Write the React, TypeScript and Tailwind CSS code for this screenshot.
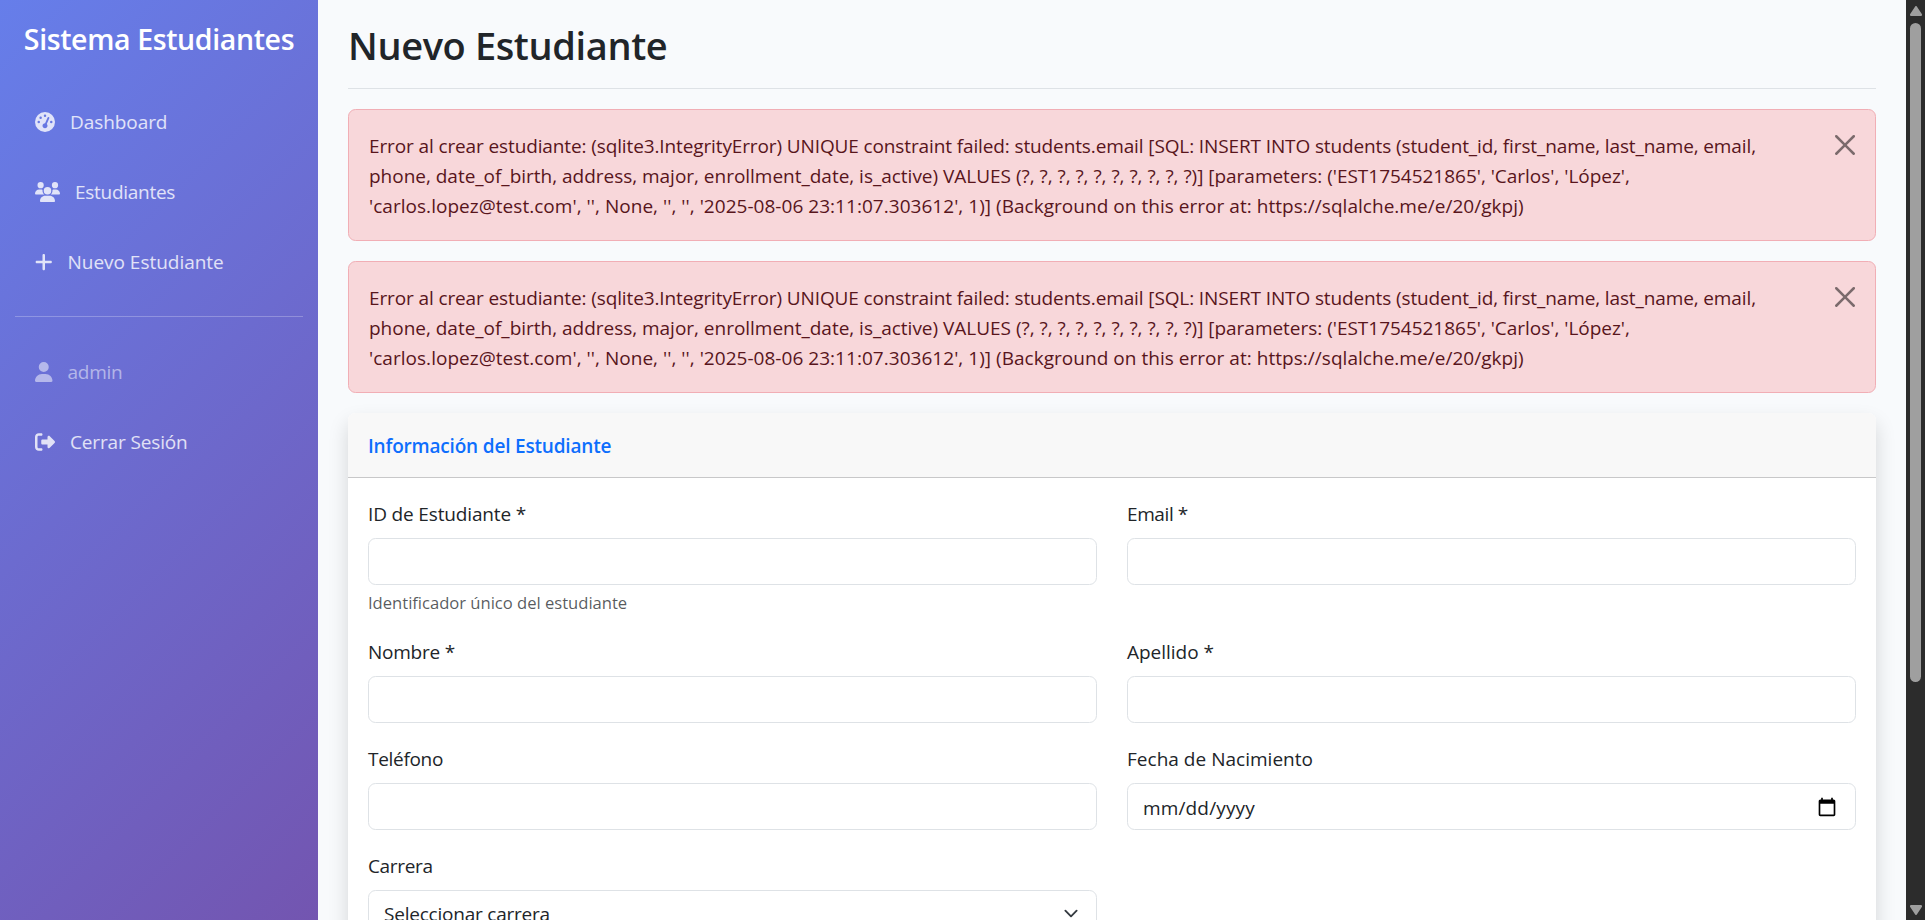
import React from "react";
import type { ReactNode } from "react";
import { FaGaugeHigh, FaPlus, FaRightFromBracket, FaUser, FaUsers } from "react-icons/fa6";

function NavItem({ icon, children, muted = false }: { icon: ReactNode; children: ReactNode; muted?: boolean }) {
  return (
    <li className="py-[5px]">
      <a
        className={
          muted
            ? "flex h-[60px] items-center gap-[15px] px-5 text-white/50"
            : "flex h-[60px] items-center gap-[15px] px-5 text-white/80"
        }
      >
        {icon}
        {children}
      </a>
    </li>
  );
}

function Sidebar() {
  return (
    <aside className="h-[1220px] w-[318px] shrink-0 bg-[linear-gradient(135deg,#667eea_0%,#764ba2_100%)] px-[15px] pt-[20px]">
      <h4 className="h-[36px] text-center text-[28.5px] leading-[38px] font-semibold tracking-[-0.37px] whitespace-nowrap text-white">
        Sistema Estudiantes
      </h4>
      <ul className="mt-[31px]">
        <NavItem icon={<FaGaugeHigh className="h-5 w-5" />}>
          <span className="tracking-[-0.07px]">Dashboard</span>
        </NavItem>
        <NavItem icon={<FaUsers className="h-5 w-[25px]" />}>
          <span className="tracking-[-0.28px]">Estudiantes</span>
        </NavItem>
        <NavItem icon={<FaPlus className="h-5 w-[17.5px]" />}>
          <span className="tracking-[-0.02px]">Nuevo Estudiante</span>
        </NavItem>
      </ul>
      <hr className="mt-[19px] mb-5 border-t border-white/25" />
      <ul>
        <NavItem muted icon={<FaUser className="h-5 w-[17.5px]" />}>
          <span className="tracking-[-0.25px]">admin</span>
        </NavItem>
        <NavItem icon={<FaRightFromBracket className="h-5 w-5" />}>
          <span className="tracking-[-0.14px]">Cerrar Sesión</span>
        </NavItem>
      </ul>
    </aside>
  );
}

function ErrorAlert() {
  return (
    <div className="mb-5 flex h-[132px] items-start justify-between rounded-[7.5px] border border-[#f1aeb5] bg-[#f8d7da] pt-5 pr-5 pl-5 text-[#58151c]">
      <p className="pt-px leading-[30px] whitespace-nowrap">
        <span className="block tracking-[-0.12px]">
          Error al crear estudiante: (sqlite3.IntegrityError) UNIQUE constraint failed: students.email [SQL: INSERT INTO
          students (student_id, first_name, last_name, email,
        </span>
        <span className="block tracking-[-0.02px]">
          phone, date_of_birth, address, major, enrollment_date, is_active) VALUES (?, ?, ?, ?, ?, ?, ?, ?, ?, ?)]
          [parameters: ('EST1754521865', 'Carlos', 'López',
        </span>
        <span className="block tracking-[0.034px]">
          'carlos.lopez@test.com', '', None, '', '', '2025-08-06 23:11:07.303612', 1)] (Background on this error at:
          https://sqlalche.me/e/20/gkpj)
        </span>
      </p>
      <button aria-label="Close" className="mt-[5px] opacity-50">
        <svg viewBox="0 0 16 16" className="h-5 w-5" fill="#000">
          <path d="M.293.293a1 1 0 0 1 1.414 0L8 6.586 14.293.293a1 1 0 1 1 1.414 1.414L9.414 8l6.293 6.293a1 1 0 0 1-1.414 1.414L8 9.414l-6.293 6.293a1 1 0 0 1-1.414-1.414L6.586 8 .293 1.707a1 1 0 0 1 0-1.414z" />
        </svg>
      </button>
    </div>
  );
}

function Field({ label, children }: { label: ReactNode; children: ReactNode }) {
  return (
    <div className="mb-5">
      <label className="mb-[9px] block pt-px leading-[30px]">{label}</label>
      {children}
    </div>
  );
}

function Box({ children }: { children?: ReactNode }) {
  return (
    <div className="flex h-[47px] items-center justify-between rounded-[7.5px] border border-[#dee2e6] bg-white px-[15px]">
      {children}
    </div>
  );
}

function StudentForm() {
  return (
    <section className="rounded-[7.5px] bg-white shadow-[0_10px_20px_rgba(0,0,0,0.15)]">
      <header className="h-[65px] rounded-t-[7.5px] border-b border-[#c8c8c9] bg-[#f8f8f8] px-5 pt-[18px]">
        <h6 className="leading-[30px] font-semibold tracking-[-0.19px] text-[#0d6efd]">Información del Estudiante</h6>
      </header>
      <form className="grid grid-cols-2 gap-x-[30px] px-5 pt-5 pb-5">
        <Field label={<span className="tracking-[-0.15px]">ID de Estudiante *</span>}>
          <Box />
          <div className="mt-[5px] h-[26px] text-[16.625px] leading-[26px] tracking-[-0.02px] text-[#212529]/75">
            Identificador único del estudiante
          </div>
        </Field>
        <Field label={<span className="tracking-[-0.4px]">Email *</span>}>
          <Box />
        </Field>
        <Field label={<span className="tracking-[-0.24px]">Nombre *</span>}>
          <Box />
        </Field>
        <Field label={<span className="tracking-[-0.02px]">Apellido *</span>}>
          <Box />
        </Field>
        <Field label={<span className="tracking-[-0.3px]">Teléfono</span>}>
          <Box />
        </Field>
        <Field label={<span className="tracking-[0.02px]">Fecha de Nacimiento</span>}>
          <Box>
            <span className="pt-[3px] tracking-[0.15px]">mm/dd/yyyy</span>
            <svg viewBox="0 0 24 24" className="mr-[3px] h-5 w-5" fill="#000">
              <path d="M20 3h-1V1h-2v2H7V1H5v2H4c-1.1 0-2 .9-2 2v16c0 1.1.9 2 2 2h16c1.1 0 2-.9 2-2V5c0-1.1-.9-2-2-2zm0 18H4V8h16v13z" />
            </svg>
          </Box>
        </Field>
        <Field label={<span className="tracking-[-0.35px]">Carrera</span>}>
          <Box>
            <span className="pt-[2px] tracking-[-0.22px]">Seleccionar carrera</span>
            <svg viewBox="0 0 16 16" className="h-[15px] w-5" fill="none" stroke="#343a40" strokeWidth="2" strokeLinecap="round" strokeLinejoin="round">
              <path d="m2 5 6 6 6-6" />
            </svg>
          </Box>
        </Field>
      </form>
    </section>
  );
}

function Scrollbar() {
  return (
    <div className="flex h-[920px] w-[19px] shrink-0 flex-col items-center bg-[#2c2c2c] pt-[6px] pb-[5px]">
      <svg viewBox="0 0 12 10" className="h-[10px] w-3 shrink-0" fill="#9f9f9f">
        <path d="M5 .7a1.2 1.2 0 0 1 2 0L11.8 8a1.2 1.2 0 0 1-1 2H1.200a1.200 1.200 0 0 1-1-2z" />
      </svg>
      <div className="mt-[7px] h-[659px] w-[11px] rounded-full bg-[#9f9f9f]" />
      <svg viewBox="0 0 12 10" className="mt-auto h-[10px] w-3 shrink-0 rotate-180" fill="#9f9f9f">
        <path d="M5 .7a1.2 1.2 0 0 1 2 0L11.8 8a1.2 1.2 0 0 1-1 2H1.200a1.200 1.200 0 0 1-1-2z" />
      </svg>
    </div>
  );
}

export default function App() {
  return (
    <div className="flex h-[920px] w-[1925px] items-start overflow-hidden bg-[#f8fafc] font-['Open_Sans','Noto_Sans',sans-serif] text-[19px] text-[#212529]">
      <Sidebar />
      <main className="min-w-0 flex-1 px-[30px] pt-5">
        <div className="mb-5 h-[69px] border-b border-[#dee2e6]">
          <h1 className="text-[38px] leading-[50px] font-semibold tracking-[-0.38px]">Nuevo Estudiante</h1>
        </div>
        <ErrorAlert />
        <ErrorAlert />
        <StudentForm />
      </main>
      <Scrollbar />
    </div>
  );
}
